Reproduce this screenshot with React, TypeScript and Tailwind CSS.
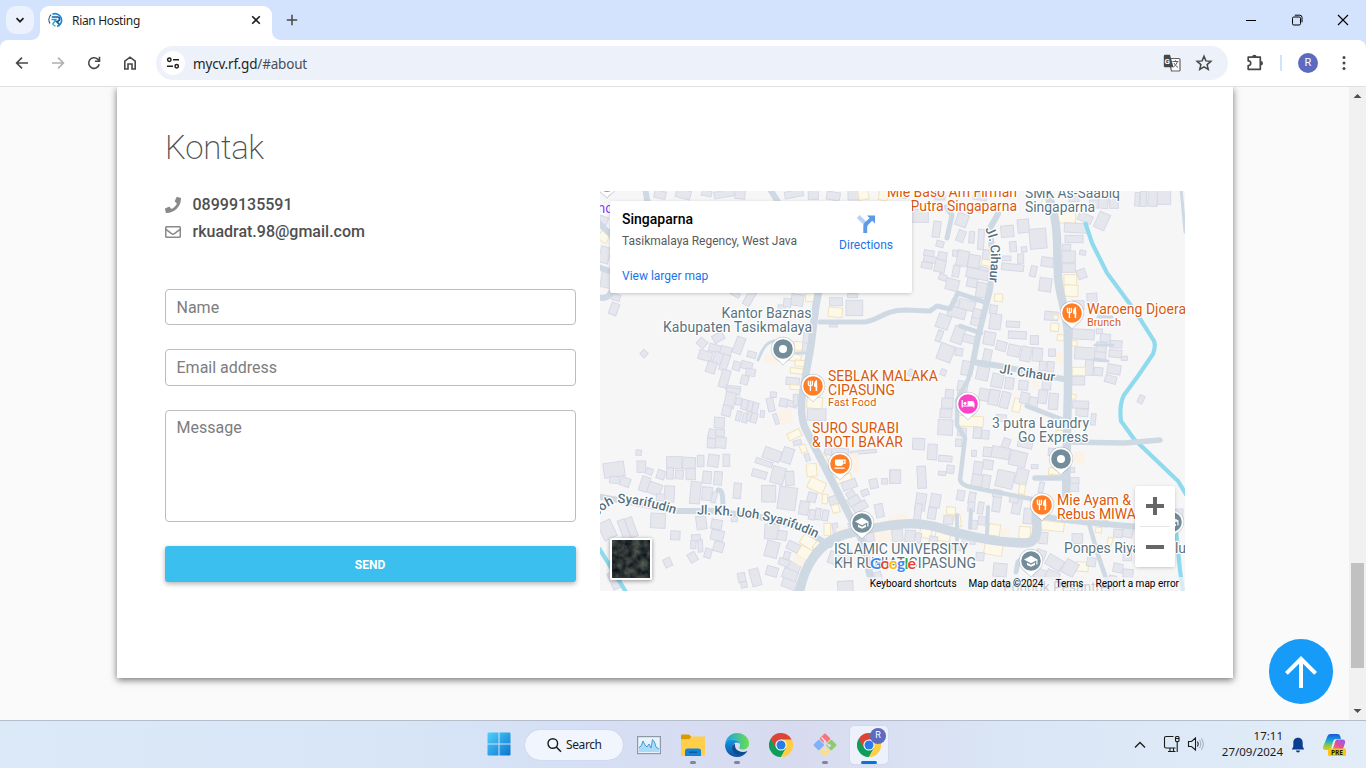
import React from "react";
import { FaPhone, FaRegEnvelope } from "react-icons/fa";
import { MdArrowUpward } from "react-icons/md";

/* ---------- map data ---------- */
type B = [number, number, number, number, number, number?]; // cx, cy, w, h, angle, kind (1 shop, 2 plaza)

const NW: B[] = [
  [180, 14, 34, 22, 12], [250, 12, 44, 26, 15], [320, 10, 30, 16, 10], [372, 12, 60, 20, -10], [420, 14, 30, 24, 5],
  [582, 12, 56, 20, -10], [640, 14, 30, 28, 0], [700, 18, 40, 24, 10], [760, 15, 32, 30, 0], [790, 14, 30, 30, -10, 1], [850, 16, 26, 30, 10, 1],
  [12, 140, 30, 30, 35, 1], [14, 195, 30, 48, 15], [20, 270, 34, 46, 10], [10, 90, 26, 22, 20],
  [132, 491, 18, 18, 40], [42, 357, 24, 36, 20], [48, 322, 24, 18, 15],
  [306, 459, 26, 24, 40], [345, 475, 36, 22, 15], [316, 497, 40, 28, 15], [355, 442, 34, 24, -30], [378, 482, 34, 24, 15],
  [417, 466, 26, 50, 20], [354, 504, 26, 34, 20], [455, 494, 26, 18, 15], [334, 532, 28, 34, 18], [374, 518, 22, 48, 20],
  [374, 566, 26, 54, 15], [410, 528, 22, 26, 15], [440, 526, 34, 22, 15], [452, 547, 28, 22, 10], [434, 570, 22, 26, 15], [400, 595, 44, 14, 5],
  [448, 325, 22, 46, 30], [405, 312, 30, 12, 30], [545, 352, 22, 14, 5], [592, 330, 36, 34, 8], [562, 338, 22, 26, 5],
  [631, 322, 28, 26, 0, 1], [706, 367, 42, 28, 5, 1], [708, 335, 38, 24, 0], [763, 354, 50, 46, 0], [758, 317, 30, 12, 0], [700, 407, 24, 8, 0],
  [620, 445, 20, 34, 8], [596, 468, 30, 26, 5, 1], [618, 474, 22, 30, 5], [586, 503, 34, 22, 12, 1], [600, 520, 30, 18, 5, 1], [591, 543, 40, 16, 8, 1],
  [515, 508, 44, 26, 15, 2], [578, 574, 40, 22, 5], [590, 592, 40, 14, 5, 1],
];
const NE: B[] = [
  [30, 14, 40, 20, 5], [90, 78, 50, 38, 0], [216, 90, 34, 38, 20], [150, 20, 30, 20, 0], [270, 20, 40, 20, 10],
  [140, 118, 22, 48, 8], [150, 162, 22, 18, 15], [213, 138, 22, 34, 20], [245, 142, 16, 34, 5], [273, 148, 18, 60, 3],
  [352, 124, 38, 34, -5], [400, 108, 34, 40, -5], [444, 146, 50, 60, -5], [369, 170, 20, 30, -5], [402, 178, 16, 16, -10],
  [117, 190, 30, 18, 10], [120, 208, 38, 18, 10], [110, 226, 32, 18, 10], [157, 198, 26, 24, 10], [150, 228, 32, 36, 12], [195, 190, 14, 18, 5],
  [218, 205, 34, 46, 12], [252, 214, 34, 38, 10], [292, 195, 28, 30, 5], [289, 218, 28, 18, 10, 1], [282, 240, 30, 16, 15],
  [198, 244, 20, 34, 10], [158, 262, 22, 18, 20], [262, 252, 66, 28, 12], [187, 284, 38, 34, 15], [246, 278, 30, 26, 10], [274, 300, 30, 44, 10],
  [350, 205, 26, 14, 0], [392, 206, 18, 28, 0], [368, 232, 66, 20, 6], [430, 244, 18, 32, 12], [472, 216, 36, 28, 8], [466, 284, 36, 40, 8],
  [552, 20, 30, 30, 0], [528, 82, 58, 34, 0, 1], [470, 40, 30, 24, 10, 1], [558, 114, 70, 28, 3], [552, 147, 54, 22, 0], [586, 84, 42, 24, 25], [636, 93, 34, 50, 25],
  [640, 30, 30, 50, 5], [672, 38, 26, 34, 0], [612, 42, 26, 24, 0],
  [742, 28, 14, 40, 3], [760, 26, 18, 46, 3], [788, 24, 28, 50, 3], [822, 18, 40, 50, 0],
  [530, 172, 24, 18, 0], [536, 200, 40, 34, 0], [536, 234, 40, 26, 0], [578, 188, 18, 14, 10], [575, 252, 26, 28, -20],
  [541, 270, 38, 32, 0, 1], [543, 302, 42, 34, 3, 1], [606, 325, 30, 30, -3], [565, 345, 34, 26, 0], [640, 372, 34, 16, 5],
  [326, 323, 24, 22, 0, 1], [310, 358, 22, 26, 8], [316, 395, 34, 46, 8], [298, 445, 34, 38, 10], [369, 403, 40, 18, 3], [382, 435, 54, 22, 3], [433, 450, 24, 26, 0],
  [484, 378, 40, 26, 5], [497, 382, 14, 14, 0, 1], [494, 412, 24, 24, 5, 1], [512, 443, 20, 18, 5, 1], [551, 460, 20, 16, 0, 1],
  [230, 345, 50, 30, 15], [200, 368, 54, 30, 15], [160, 395, 38, 42, 20], [196, 340, 24, 20, 15], [260, 372, 24, 30, 15], [205, 435, 34, 50, 20], [258, 396, 30, 22, 15], [240, 448, 44, 22, 15], [148, 438, 16, 34, 20],
  [167, 488, 44, 50, 20], [207, 486, 22, 22, 10], [160, 547, 16, 18, 20], [62, 548, 14, 20, 30], [232, 535, 34, 42, 10], [218, 588, 30, 30, 10],
  [292, 496, 24, 36, 12], [334, 468, 30, 28, 15], [372, 482, 36, 34, 12], [408, 492, 30, 44, 12], [442, 494, 30, 40, 5], [486, 488, 20, 22, 0], [512, 504, 28, 38, 0, 2],
  [278, 550, 36, 40, 12], [322, 572, 34, 40, 12], [358, 580, 26, 34, 8], [400, 586, 28, 28, 5], [437, 580, 20, 28, 5, 2], [470, 582, 26, 34, 5],
  [458, 528, 20, 28, 5], [482, 530, 20, 30, 5],
  [580, 433, 66, 30, 3], [628, 424, 18, 14, 0], [646, 444, 30, 24, 5], [584, 490, 60, 36, 3], [634, 472, 30, 30, 5], [678, 463, 36, 22, 3], [676, 491, 38, 22, 5],
  [630, 500, 34, 28, 3], [598, 533, 24, 46, 3], [566, 544, 40, 24, 0, 1], [625, 545, 26, 24, 5], [672, 538, 40, 28, 10], [662, 568, 34, 22, 15], [565, 572, 38, 26, 0], [703, 505, 18, 12, 0],
];
const SW: B[] = [
  [400, 4, 40, 20, 5], [390, 30, 30, 46, 12], [416, 34, 16, 22, 10], [434, 44, 18, 30, 15], [450, 50, 14, 34, 12], [466, 54, 16, 32, 12], [380, 62, 26, 32, 12], [416, 78, 14, 30, 15], [436, 84, 16, 28, 15], [462, 84, 18, 28, 15], [487, 72, 12, 20, 5], [447, 78, 10, 28, 15],
  [520, 14, 18, 16, 5], [512, 44, 20, 40, -12], [551, 38, 24, 24, 10], [576, 42, 30, 18, 15], [528, 87, 12, 32, -20], [587, 30, 14, 34, 0], [556, 80, 40, 44, -10, 2],
  [358, 98, 30, 32, 3], [338, 132, 26, 26, 15], [334, 160, 24, 28, 3], [362, 158, 32, 32, 5], [360, 128, 26, 20, 5],
  [116, 188, 16, 16, 5], [42, 239, 62, 44, -8], [44, 270, 30, 20, 5], [76, 276, 28, 26, 20], [124, 230, 26, 34, 0], [148, 244, 20, 18, 20], [183, 254, 24, 26, 20],
  [223, 218, 46, 36, 0], [267, 220, 38, 36, 3], [302, 213, 20, 34, 0], [340, 212, 32, 36, 8], [379, 211, 20, 36, 0], [210, 250, 20, 34, 3], [238, 254, 24, 26, 5], [272, 252, 28, 34, 0], [321, 262, 26, 36, 5], [354, 265, 24, 40, 5],
  [134, 282, 26, 44, 18], [164, 296, 40, 34, 20], [208, 312, 30, 48, 3], [182, 322, 26, 20, 5], [286, 308, 30, 66, 5], [321, 311, 30, 40, 5], [342, 322, 14, 32, 15], [412, 302, 22, 46, 5],
  [516, 194, 52, 34, 20], [562, 196, 32, 46, 18], [492, 218, 52, 16, 18], [478, 252, 44, 22, 15], [534, 256, 40, 50, 15], [569, 265, 26, 42, -3], [506, 311, 42, 50, 0], [562, 325, 54, 68, 8],
  [174, 392, 44, 44, 3], [304, 398, 30, 40, -8], [350, 403, 32, 28, 10], [403, 382, 18, 26, 0], [226, 436, 28, 26, 3], [288, 444, 26, 20, -5], [352, 436, 38, 30, 12], [280, 464, 16, 24, 0], [301, 468, 14, 36, -3], [356, 470, 30, 30, 15], [324, 490, 20, 28, 15], [278, 502, 24, 28, -30], [203, 518, 22, 26, -25],
  [22, 420, 40, 54, -25], [72, 418, 22, 60, -20], [94, 412, 22, 60, -20], [45, 570, 30, 52, -25],
  [515, 425, 42, 44, 3], [546, 436, 28, 28, 8], [516, 478, 38, 48, 15], [580, 470, 38, 26, 25], [561, 496, 18, 22, 15], [554, 518, 36, 20, 20], [516, 544, 34, 28, 15], [582, 532, 36, 26, 25], [570, 554, 44, 30, 22], [568, 582, 44, 26, 20], [466, 562, 28, 52, -15], [425, 563, 22, 28, -10], [432, 584, 18, 18, -10],
  [644, 38, 46, 34, 5, 1], [650, 74, 56, 34, 0], [583, 134, 40, 22, -25, 1], [592, 158, 24, 14, -15], [610, 176, 18, 24, -20, 1], [622, 202, 14, 22, -20],
  [635, 240, 30, 38, -5, 1], [650, 286, 50, 34, 25, 1], [636, 322, 26, 28, 15], [675, 327, 16, 28, 5, 1], [704, 330, 34, 26, -20], [612, 354, 28, 40, 10], [636, 374, 18, 30, 10], [654, 372, 16, 34, 8], [676, 376, 18, 32, 10], [707, 356, 22, 24, -15, 1], [682, 418, 20, 36, 0, 1], [706, 416, 16, 32, -10], [730, 425, 40, 26, -10, 2],
  [626, 456, 46, 34, 35, 1], [652, 468, 20, 26, 35, 1], [616, 490, 44, 34, 30, 1], [600, 514, 40, 24, 30, 2],
  [690, 180, 30, 30, 15], [674, 206, 14, 16, -15, 1], [720, 186, 50, 22, 5], [790, 186, 78, 10, -5], [765, 220, 26, 60, -10, 2], [730, 266, 50, 20, -18, 1], [748, 284, 44, 26, -20], [754, 316, 24, 26, -30], [762, 332, 36, 24, -30], [780, 350, 44, 24, -30], [795, 308, 22, 18, -20], [821, 281, 24, 28, -12], [854, 274, 18, 16, 0], [884, 260, 30, 40, 0], [838, 362, 24, 40, -12],
  [760, 404, 30, 16, -20], [850, 440, 60, 34, -5, 2], [885, 386, 30, 22, -5, 2], [810, 440, 24, 28, -10], [706, 506, 40, 36, 20], [740, 498, 30, 26, -10], [736, 590, 46, 34, -3], [834, 560, 22, 28, -15],
];
const SE: B[] = [
  [178, 12, 24, 26, 5], [172, 40, 34, 30, 3], [168, 70, 36, 26, 3], [166, 112, 44, 46, 3], [215, 8, 24, 14, 5],
  [243, 94, 74, 32, 4, 1], [216, 126, 26, 24, 5], [262, 128, 24, 34, 5], [286, 134, 22, 26, 5], [86, 162, 36, 34, 3], [127, 186, 28, 46, 3], [206, 158, 18, 22, 3], [166, 206, 40, 18, 5], [181, 238, 22, 24, 8], [156, 250, 22, 12, 5], [95, 262, 26, 66, -3], [16, 260, 32, 40, 0], [252, 190, 14, 18, 0],
  [282, 14, 30, 36, 12], [312, 22, 30, 46, 12], [345, 30, 26, 48, 14], [381, 46, 22, 40, 15, 1], [404, 24, 26, 32, 12], [430, 40, 26, 36, 10], [458, 20, 26, 40, 8], [490, 34, 28, 48, 4], [334, 84, 30, 20, 5],
  [548, 20, 20, 14, 10, 1], [572, 44, 48, 22, 2], [576, 68, 36, 22, 4], [610, 88, 14, 34, 6], [753, 28, 16, 24, 25], [512, 130, 28, 18, 0, 1],
  [348, 160, 22, 30, 20], [294, 186, 28, 28, 5], [332, 188, 54, 34, 10], [384, 206, 50, 44, 14], [405, 164, 44, 18, 12], [294, 224, 30, 28, 8], [264, 234, 26, 38, 8], [262, 272, 34, 36, 10], [288, 276, 24, 42, 10], [345, 268, 52, 50, 12], [395, 260, 36, 46, 14], [396, 298, 18, 28, 8, 1], [434, 230, 20, 12, 0],
  [486, 186, 22, 22, 3], [492, 244, 32, 20, 5, 1], [568, 203, 34, 40, -3, 2], [554, 272, 26, 18, 0], [552, 292, 28, 24, 0], [543, 240, 22, 14, 0], [454, 292, 14, 32, 12], [478, 330, 50, 36, 0, 2],
  [92, 336, 30, 52, 8], [84, 366, 20, 50, 8], [136, 332, 30, 40, 10], [126, 370, 24, 34, 8], [183, 362, 26, 22, 5, 1], [204, 392, 16, 36, -8, 1], [212, 316, 22, 30, 10], [246, 324, 20, 34, 10], [175, 390, 28, 26, 5], [244, 350, 20, 28, 5], [272, 354, 16, 36, 10], [276, 392, 22, 26, 5], [252, 404, 20, 26, 5], [320, 342, 24, 46, 8], [322, 310, 26, 22, 8], [380, 350, 26, 44, 12], [372, 328, 26, 20, 10],
  [25, 386, 60, 26, -8, 2], [107, 428, 34, 32, 12, 1], [158, 440, 44, 26, 8, 1], [313, 420, 34, 34, 8, 1], [347, 427, 30, 24, 12, 2], [404, 428, 34, 36, 5, 1], [310, 478, 54, 34, 10, 1], [22, 436, 32, 36, -5], [60, 438, 30, 34, 5], [84, 444, 18, 30, 10], [130, 452, 24, 26, 8], [236, 452, 40, 20, 5], [200, 470, 30, 20, 10], [270, 500, 24, 24, 5], [414, 378, 26, 46, 5],
  [484, 408, 76, 28, 6, 1], [460, 444, 26, 34, 5], [452, 494, 28, 28, 20], [562, 446, 32, 30, 0], [626, 420, 18, 16, 5, 1], [660, 454, 14, 22, 15, 1], [684, 430, 26, 24, 5], [714, 424, 30, 36, 10], [577, 530, 36, 28, 5, 1], [494, 518, 50, 34, 30], [540, 534, 40, 44, 30], [604, 516, 26, 26, 10], [450, 552, 34, 30, 20], [488, 556, 40, 26, 25], [330, 540, 40, 40, 5], [684, 534, 28, 26, 10], [712, 500, 26, 24, 0], [714, 550, 30, 24, 5], [668, 566, 22, 18, 10], [862, 374, 34, 34, 0], [640, 400, 24, 20, 8],
];

const FILL = ["#e6e7ed", "#fdf9ea", "#fbf2e8"];
const EDGE = ["#d6d8e8", "#f1e2bd", "none"];

function Blocks({ items, x, y }: { items: B[]; x: number; y: number }) {
  return (
    <g transform={`translate(${x} ${y}) scale(.33333)`}>
      {items.map(([cx, cy, w, h, a, k = 0], i) => (
        <rect key={i} x={cx - w / 2} y={cy - h / 2} width={w} height={h} fill={FILL[k]} stroke={EDGE[k]} strokeWidth="3" transform={`rotate(${a} ${cx} ${cy})`} />
      ))}
    </g>
  );
}

const ROADS: [string, number][] = [
  ["M820 285L816 305 811 345 804 385C800 405 801 420 806 430L862 540 870 575", 7.5],
  ["M799 595C803 568 818 540 850 533C890 524 915 520 940 528C980 540 1010 543 1026 543C1034 543 1037 536 1037 528L1036 508", 9.5],
  ["M1045 188C1052 205 1056 215 1057 240L1058 277C1060 300 1067 310 1068 335L1068 390 1067 430 1066 500", 8.5],
  ["M1035 515C1060 520 1080 522 1140 527", 6],
  ["M1088 520L1098 555 1110 590", 4.5],
  ["M998 214L990 228 993 262 990 290 978 337 973 362 1000 366 1063 379", 6],
  ["M973 362L968 380 957 400 957 425 965 438 960 480C962 487 972 487 990 491L1032 499", 4.5],
  ["M820 322L865 322C880 320 884 310 905 310L930 311 937 306 950 309 958 293 987 303", 5],
  ["M960 326L981 333", 4.5],
  ["M946 207L952 215 947 238", 5],
  ["M1027 406L1063 420", 5],
  ["M1067 442L1125 443 1160 440", 5.5],
  ["M1035 478L1064 478", 5.5],
  ["M596 496L630 502 675 511 712 511 760 517 800 528 830 545", 6],
  ["M718 490C722 490 723 493 723 510", 5],
  ["M988 507L987 534M971 510L970 528M957 515L957 540", 4],
  ["M758 360C762 350 766 342 774 341", 3],
  ["M796 353L812 353", 3],
  ["M645 188L648 205M768 186L780 205", 6],
  ["M598 222L616 240M598 267L612 272M598 297Q608 300 611 292", 6],
  ["M1095 345L1113 345M1095 359L1108 361M1098 317L1112 317", 3],
  ["M1181 188L1185 232", 3],
  ["M1016 572L1018 562 1026 555", 5],
];

/* ---------- map drawing ---------- */
const ICONS: Record<string, React.ReactNode> = {
  dot: <circle r="4" fill="#fff" />,
  fork: (
    <g fill="none" stroke="#fff" strokeWidth="1.3">
      <path d="M-4.6-5.2v3.6q0 1.4 2 1.4t2-1.4v-3.6M-2.6-5.2V5" />
      <path d="M3.4-5C1.8-4 1.6-1.5 1.9.4h1.7z" fill="#fff" />
      <path d="M3.4 0v5" strokeWidth="1.6" />
    </g>
  ),
  bed: (
    <g>
      <path d="M-5.8-4v7.600M-5.8 2H5.800M5.800 3.600V-.8" fill="none" stroke="#fff" strokeWidth="1.200" />
      <path d="M-.4-3H4Q6.200-3 6.200-.8V2H-.4z" fill="#fff" />
      <circle cx="-3" cy="-.8" r="1.500" fill="#fff" />
    </g>
  ),
  cup: (
    <g>
      <path d="M-5-4.5H3V0Q3 2-1 2T-5 0z" fill="#fff" />
      <path d="M2.5-3.8H5V-.8H2.5M-5.4 4.2H4.6" fill="none" stroke="#fff" strokeWidth="1.3" />
    </g>
  ),
  cap: <path d="M0-5.2L-7-1.5 0 2.3 5.3-.6V3.6H6.5V-1.6zM-4 1.6V4L0 5.7 4 4V1.6L0 3.8z" fill="#fff" />,
};

const PINS: [number, number, string, string][] = [
  [783, 349, "#738d9a", "dot"], [813, 386, "#ff7f27", "fork"], [1072, 313, "#ff7f27", "fork"], [968, 404, "#fa43c8", "bed"],
  [840, 464, "#ff7f27", "cup"], [862, 523, "#738d9a", "cap"], [1061, 459, "#738d9a", "dot"], [1042, 505, "#ff7f27", "fork"],
  [1031, 561, "#738d9a", "cap"], [1172, 522, "#738d9a", "cap"], [607, 182, "#8a4de8", "dot"],
];

type L = [string, number, number, number, number, "o" | "g", "start" | "end"];
const LABELS: L[] = [
  ["Mie Baso Am Firman", 1017, 197, 14, 130, "o", "end"],
  ["Putra Singaparna", 1017, 211, 14, 106.5, "o", "end"],
  ["SMK As-Saabiq", 1025, 198, 14, 95, "g", "start"],
  ["Singaparna", 1025, 212, 14, 70, "g", "start"],
  ["Kantor Baznas", 811.5, 318, 14, 90, "g", "end"],
  ["Kabupaten Tasikmalaya", 812, 332, 14, 149, "g", "end"],
  ["SEBLAK MALAKA", 828, 381, 14, 110, "o", "start"],
  ["CIPASUNG", 828, 395, 14, 67, "o", "start"],
  ["Fast Food", 828, 405.5, 11, 48.5, "o", "start"],
  ["SURO SURABI", 812, 433, 14, 87, "o", "start"],
  ["& ROTI BAKAR", 812, 447, 14, 91, "o", "start"],
  ["Waroeng Djoera", 1087, 314, 14, 99, "o", "start"],
  ["Brunch", 1087, 325.5, 11, 34, "o", "start"],
  ["3 putra Laundry", 1089, 428, 14, 97, "g", "end"],
  ["Go Express", 1088.5, 442, 14, 70.5, "g", "end"],
  ["Mie Ayam &", 1057, 505, 14, 74, "o", "start"],
  ["Rebus MIWA", 1057, 519, 14, 79, "o", "start"],
  ["ISLAMIC UNIVERSITY", 834, 554, 14, 134, "g", "start"],
  ["KH RUHIAT CIPASUNG", 834, 568, 14, 142, "g", "start"],
  ["Ponpes Riyadlul Ulu", 1064, 553, 14, 122, "g", "start"],
  ["Pondok Pesantren", 1003, 592, 14, 112, "g", "start"],
];

function MapDrawing() {
  return (
    <svg viewBox="600 191 585 400" className="block h-[400px] w-[585px]" fontFamily="Roboto, sans-serif">
      <rect x="600" y="191" width="585" height="400" fill="#f6f6f7" />
      <Blocks items={NW} x={600} y={190} />
      <Blocks items={NE} x={890} y={190} />
      <Blocks items={SW} x={600} y={390} />
      <Blocks items={SE} x={890} y={390} />
      <path d="M1085 222L1092 243 1107 273 1135 311 1154 341Q1156 346 1153 354L1138 376 1124 395Q1119 405 1121 421L1134 439 1178 481 1187 496M1176 530L1180 570 1183 592M599 548L626 592" fill="none" stroke="#90daee" strokeWidth="4.2" />
      <g fill="none" stroke="#cfd9e3" strokeLinecap="round" strokeLinejoin="round">
        {ROADS.map(([d, w], i) => <path key={i} d={d} strokeWidth={w} />)}
      </g>
      <g fill="#56707f" stroke="#fff" strokeWidth="2.5" paintOrder="stroke" strokeLinejoin="round" fontSize="13" fontWeight="500">
        <path id="st-a" d="M697 514.500C735 515 775 517 818 539" fill="none" stroke="none" />
        <path id="st-b" d="M556 566L597 518C606 507 612 502 622 503C640 504 658 509 675 514" fill="none" stroke="none" />
        <path id="st-c" d="M985 229C991 240 993 256 988 290" fill="none" stroke="none" />
        <path id="st-d" d="M999 373L1058 382" fill="none" stroke="none" />
        <text textLength="123"><textPath href="#st-a">Jl. Kh. Uoh Syarifudin</textPath></text>
        <text textAnchor="end"><textPath href="#st-b" startOffset="100%">Jl. Kh. Uoh Syarifudin</textPath></text>
        <text textLength="54"><textPath href="#st-c">Jl. Cihaur</textPath></text>
        <text textLength="56"><textPath href="#st-d">Jl. Cihaur</textPath></text>
      </g>
      {PINS.map(([x, y, c, k], i) => (
        <g key={i} transform={`translate(${x} ${y})`}>
          <path d="M0 16.5C-3 12-12.2 9-12.2 0A12.2 12.2 0 1 1 12.2 0C12.2 9 3 12 0 16.5z" fill="#8b95a0" opacity=".45" />
          <path d="M0 15.5C-3 11-11.5 8.5-11.5 0A11.5 11.5 0 1 1 11.5 0C11.5 8.5 3 11 0 15.5z" fill="#fff" />
          <circle r="9.8" fill={c} />
          {ICONS[k]}
        </g>
      ))}
      {LABELS.map(([t, x, y, s, len, c, a]) => (
        <text key={t} x={x} y={y} fontSize={s} textLength={len} textAnchor={a} fill={c === "o" ? "#d9590c" : "#5a7482"} stroke="#fff" strokeWidth="2.4" strokeLinejoin="round" paintOrder="stroke">{t}</text>
      ))}
      <text x="597.500" y="213" fontSize="14" fill="#8a3ff0" stroke="#fff" strokeWidth="2.4" paintOrder="stroke">ho</text>
    </svg>
  );
}

function MapPanel() {
  return (
    <div className="relative h-[400px] w-[585px] shrink-0 overflow-hidden font-[Roboto,sans-serif]">
      <MapDrawing />
      <div className="absolute left-[10px] top-[10px] flex h-[92px] w-[302px] justify-between rounded-[2px] bg-white pl-3 pr-[19px] pt-[9px] shadow-[0_1px_4px_-1px_rgba(0,0,0,0.3)]">
        <div className="flex flex-col">
          <div className="text-[14px] font-medium leading-[18px] text-black">Singaparna</div>
          <div className="mt-[5px] text-[12px] leading-4 text-[#5b5b5b]">Tasikmalaya Regency, West Java</div>
          <div className="mt-[19px] text-[12px] leading-4 text-[#1a73e8]">View larger map</div>
        </div>
        <div className="flex flex-col items-center">
          <svg viewBox="0 0 20 20" className="mt-[4px] h-5 w-5">
            <path d="M.8 4L3.6 1l7 7-2 3.4z" fill="#b4d2f8" />
            <path d="M7.3 19v-7q0-2 1.5-3.4L13.5 4 11 1.5h8v8L16.2 6.800 12 11q-.8.900-.8 2v6z" fill="#5c9ae8" />
          </svg>
          <div className="mt-[3px] text-[12px] leading-4 text-[#1a73e8]">Directions</div>
        </div>
      </div>
      <div className="absolute left-[10px] top-[347px] h-[42px] w-[42px] rounded-[2px] border-2 border-white shadow-[0_1px_4px_rgba(0,0,0,0.4)]">
        <svg viewBox="0 0 38 38" className="h-full w-full" preserveAspectRatio="none">
          <defs>
            <filter id="land" x="0" y="0" width="100%" height="100%" colorInterpolationFilters="sRGB">
              <feTurbulence type="fractalNoise" baseFrequency=".14" numOctaves="4" seed="4" />
              <feColorMatrix values=".4 0 0 0 -.02  .4 0 0 0 .01  .3 0 0 0 .06  0 0 0 0 1" />
            </filter>
          </defs>
          <rect width="38" height="38" fill="#2f3b3b" />
          <rect width="38" height="38" filter="url(#land)" />
        </svg>
      </div>
      <div className="absolute left-[535px] top-[295px] flex h-[81px] w-10 flex-col items-center rounded-[2px] bg-white shadow-[0_1px_4px_-1px_rgba(0,0,0,0.3)]">
        <svg viewBox="0 0 40 40" className="h-10 w-10"><path d="M11 20H29M20 11V29" stroke="#666" strokeWidth="4" /></svg>
        <div className="h-px w-[30px] bg-[#e6e6e6]" />
        <svg viewBox="0 0 40 40" className="h-10 w-10"><path d="M11 20H29" stroke="#666" strokeWidth="4" /></svg>
      </div>
      <svg viewBox="0 0 60 24" className="absolute left-[268px] top-[359px] h-6 w-[60px]" fontFamily="Lato, sans-serif">
        <text x="2" y="19" fontSize="16" fontWeight="700" textLength="46" stroke="#fff" strokeWidth="2" strokeLinejoin="round" paintOrder="stroke">
          <tspan fill="#4285f4">G</tspan><tspan fill="#ea4335">o</tspan><tspan fill="#fbbc04">o</tspan><tspan fill="#4285f4">g</tspan><tspan fill="#34a853">l</tspan><tspan fill="#ea4335">e</tspan>
        </text>
      </svg>
      <div className="absolute bottom-0 right-0 flex h-[14px] items-center gap-3 bg-[#f5f5f5]/70 px-[6px] text-[10px] leading-[14px] text-black">
        <span className="whitespace-nowrap">Keyboard shortcuts</span>
        <span className="whitespace-nowrap">Map data ©2024</span>
        <span>Terms</span>
        <span className="whitespace-nowrap">Report a map error</span>
      </div>
    </div>
  );
}

/* ---------- browser chrome ---------- */
function Favicon() {
  return (
    <svg viewBox="0 0 16 16" className="h-4 w-4">
      <path d="M3.200 2.600A7 7 0 0 0 2 11.500" fill="none" stroke="#2c4a66" strokeWidth="1.100" />
      <path d="M4.500 2.100A6.600 6.600 0 1 1 9 14.500" fill="none" stroke="#1b87e0" strokeWidth="1.700" />
      <path d="M3.800 5H9.500q2.300.3 2 2.300T8.500 9.500L11.500 12.500" fill="none" stroke="#17598f" strokeWidth="1.700" />
      <path d="M3.500 7.500H8L4.800 12Q6 13.700 7.500 14.200" fill="none" stroke="#1d9be6" strokeWidth="1.300" />
    </svg>
  );
}

function TabStrip() {
  return (
    <div className="flex h-10 items-start bg-[#d3e3fd]">
      <div className="ml-[6px] mt-[6px] flex h-7 w-7 items-center justify-center rounded-[10px] bg-[#ebf2fe]">
        <svg viewBox="0 0 10 10" className="h-[10px] w-[10px]"><path d="M1.500 3.200L5 6.700 8.500 3.200" fill="none" stroke="#1f1f1f" strokeWidth="1.700" /></svg>
      </div>
      <div className="relative ml-[6px] mt-[6px] flex h-[34px] w-[232px] items-center rounded-t-[9px] bg-white pl-2 pr-[10px]">
        <div className="absolute bottom-0 left-[-8px] h-2 w-2 bg-[radial-gradient(circle_at_0_0,#d3e3fd_7.500px,#fff_8px)]" />
        <div className="absolute bottom-0 right-[-8px] h-2 w-2 bg-[radial-gradient(circle_at_100%_0,#d3e3fd_7.500px,#fff_8px)]" />
        <div className="-mt-[6px] flex w-full items-center">
          <Favicon />
          <span className="ml-2 pt-[2px] text-[12px] leading-4 tracking-[-0.33px] text-[#1f1f1f]">Rian Hosting</span>
          <svg viewBox="0 0 12 12" className="ml-auto h-3 w-3"><path d="M2.200 2.200L9.800 9.800M9.800 2.200L2.200 9.800" stroke="#1f1f1f" strokeWidth="1.600" /></svg>
        </div>
      </div>
      <svg viewBox="0 0 12 12" className="ml-[14px] mt-[14px] h-3 w-3"><path d="M6 .8V11.200M.8 6H11.200" stroke="#474747" strokeWidth="1.500" /></svg>
      <div className="ml-auto mr-[17px] mt-[14px] flex items-center gap-[34px]">
        <svg viewBox="0 0 12 12" className="h-3 w-3"><path d="M1 6.500H11" stroke="#000" /></svg>
        <svg viewBox="0 0 12 12" className="h-3 w-3"><rect x="1.500" y="3" width="8" height="8" rx="1.300" fill="none" stroke="#000" /><path d="M3.800 1.200H8.800Q11 1.200 11 3.400V8.400" fill="none" stroke="#000" /></svg>
        <svg viewBox="0 0 12 12" className="h-3 w-3"><path d="M1 1L11 11M11 1L1 11" stroke="#000" strokeWidth="1.100" /></svg>
      </div>
    </div>
  );
}

function Toolbar() {
  const s = { fill: "none", stroke: "#474747", strokeWidth: 1.6 } as const;
  return (
    <div className="bg-[#d3e3fd]">
      <div className="flex h-[46px] items-center rounded-t-[8px] bg-white pl-[14px] pr-[14px]">
        <div className="flex gap-5">
          <svg viewBox="0 0 16 16" className="h-4 w-4"><path d="M14 8H3M8 2.600L2.600 8 8 13.400" {...s} /></svg>
          <svg viewBox="0 0 16 16" className="h-4 w-4"><path d="M2 8H13M8 2.600L13.400 8 8 13.400" {...s} stroke="#b0b0b0" /></svg>
          <svg viewBox="0 0 16 16" className="h-4 w-4"><path d="M13.200 9.200A5.300 5.300 0 1 1 11.700 4.200L13.300 5.800" {...s} /><path d="M13.500 1.800V6.200H9" {...s} /></svg>
          <svg viewBox="0 0 16 16" className="h-4 w-4"><path d="M2.800 14V6.200L8 2.200 13.200 6.200V14H10V9H6V14z" {...s} /></svg>
        </div>
        <div className="ml-[18px] flex h-[34px] w-[1072px] items-center rounded-full bg-[#edf2fa] pl-[5px] pr-[15px]">
          <div className="flex h-6 w-6 items-center justify-center rounded-full bg-white">
            <svg viewBox="0 0 16 16" className="h-4 w-4" fill="none" stroke="#1f1f1f" strokeWidth="1.500"><circle cx="4.300" cy="4.800" r="1.700" /><path d="M8 4.800H14M2 11.200H8" /><circle cx="11.700" cy="11.200" r="1.700" /></svg>
          </div>
          <span className="ml-2 pt-px text-[13.500px] leading-5 tracking-[-0.18px] text-[#1f1f1f]">mycv.rf.gd<span className="text-[#474f5c]">/#about</span></span>
          <svg viewBox="0 0 18 18" className="ml-auto h-[18px] w-[18px]">
            <path d="M8 4.500H16Q17 4.500 17 5.500V16Q17 17 16 17H8.500L7.500 13" fill="#fff" stroke="#5f6368" strokeWidth="1.200" />
            <path d="M2 .8H7L10.500 13.200H2Q.8 13.200.8 12V2Q.8.8 2 .8z" fill="#474747" />
            <text x="1.600" y="10" fontSize="8" fontWeight="700" fill="#fff" fontFamily="Roboto">G</text>
            <path d="M9.500 7.500H15.500M12.500 6.200V7.500M14.500 7.500Q13.500 11 10.500 13M11 9Q12.500 12 15 13.500" fill="none" stroke="#5f6368" />
          </svg>
          <svg viewBox="0 0 18 18" className="ml-[14px] h-[18px] w-[18px]"><path d="M9 2.200L10.900 6.900 15.900 7.300 12.100 10.600 13.300 15.500 9 12.900 4.700 15.500 5.900 10.600 2.100 7.300 7.100 6.900z" {...s} strokeWidth="1.500" /></svg>
        </div>
        <svg viewBox="0 0 18 18" className="ml-[18px] h-[18px] w-[18px]">
          <path d="M2.200 3.200H14.300V15.300H2.200V11.600Q4.700 11.600 4.700 9.200T2.200 6.800z" fill="none" stroke="#474747" strokeWidth="1.700" strokeLinejoin="round" />
          <path d="M6.200 3a2.200 2.200 0 0 1 4.400 0zM14.800 7a2.200 2.200 0 0 1 0 4.400z" fill="#474747" />
        </svg>
        <div className="ml-[16px] h-4 w-[2px] bg-[#d3e3fd]" />
        <div className="ml-[16px] flex h-5 w-5 items-center justify-center rounded-full bg-[#5c6bc0] font-[Roboto,sans-serif] text-[11px] text-white">R</div>
        <svg viewBox="0 0 16 16" className="ml-auto h-4 w-4" fill="#474747"><circle cx="8" cy="2.500" r="1.500" /><circle cx="8" cy="8" r="1.500" /><circle cx="8" cy="13.500" r="1.500" /></svg>
      </div>
      <div className="h-px bg-[#dfe1e4]" />
    </div>
  );
}

/* ---------- page ---------- */
function Field({ label, className }: { label: string; className: string }) {
  return <div className={`w-[411px] rounded-[4px] border border-[#bdbdbd] px-[10.5px] text-[16px] leading-6 text-[#7d7d7d] ${className}`}>{label}</div>;
}

function Contact() {
  return (
    <section className="h-[591px] w-[1116px] bg-white pl-12 pt-[41px] font-[Roboto,sans-serif] shadow-[0_2px_7px_rgba(0,0,0,0.55)]">
      <h2 className="text-[33px] font-extralight leading-10 tracking-[-0.3px] text-[#4f4f4f]">Kontak</h2>
      <div className="mt-[23px] flex gap-6">
        <div className="w-[411px]">
          <div className="flex h-[27px] items-center text-[16px] font-medium text-[#4f4f4f]"><FaPhone className="mr-[11.500px] h-4 w-4 text-[#8a8a8a]" />08999135591</div>
          <div className="flex h-[27px] items-center text-[16px] font-medium text-[#4f4f4f]"><FaRegEnvelope className="mr-[11.500px] h-4 w-4 text-[#8a8a8a]" />rkuadrat.98@gmail.com</div>
          <Field label="Name" className="mt-[44px] h-9 pt-[6px]" />
          <Field label="Email address" className="mt-6 h-[37px] pt-[6px]" />
          <Field label="Message" className="mt-6 h-[112px] pt-[5px]" />
          <div className="mt-6 flex h-9 items-center justify-center rounded-[3px] bg-[#3bbfee] pr-px pt-[2px] text-[12px] font-bold text-white shadow-[0_2px_5px_rgba(0,0,0,0.3)]">SEND</div>
        </div>
        <MapPanel />
      </div>
    </section>
  );
}

function Viewport() {
  return (
    <div className="relative flex h-[633px] overflow-hidden bg-[#fafafa]">
      <main className="h-full flex-1 overflow-hidden pl-[117px]"><Contact /></main>
      <div className="flex w-[17px] flex-col items-center bg-[#f1f1f1]">
        <svg viewBox="0 0 17 17" className="h-[17px] w-[17px]"><path d="M4.500 11L8.500 7 12.500 11z" fill="#505050" /></svg>
        <div className="mt-[459px] h-[105px] w-[13px] bg-[#c1c1c1]" />
        <svg viewBox="0 0 17 17" className="mt-auto h-[17px] w-[17px]"><path d="M4.500 6L8.500 10 12.500 6z" fill="#505050" /></svg>
      </div>
      <div className="absolute left-[1269px] top-[552px] flex h-[65px] w-16 items-center justify-center rounded-full bg-[#169bf8] text-white">
        <MdArrowUpward className="h-12 w-12" />
      </div>
    </div>
  );
}

/* ---------- taskbar ---------- */
function Chrome() {
  return (
    <svg viewBox="0 0 24 24" className="h-6 w-6">
      <path d="M12 12L1.600 6A12 12 0 0 0 12 24L17 15z" fill="#0f9d58" />
      <path d="M12 12L17.200 15 12 24A12 12 0 0 0 22.400 6H12z" fill="#ffcd40" />
      <path d="M12 6.500H22.600A12 12 0 0 0 1.600 6L7 15z" fill="#db4437" />
      <circle cx="12" cy="12" r="5.600" fill="#fff" />
      <circle cx="12" cy="12" r="4.500" fill="#2a7bea" />
    </svg>
  );
}

function Slot({ children, mark = "none" }: { children: React.ReactNode; mark?: "none" | "dot" | "bar" }) {
  return (
    <div className={`relative flex h-[38px] w-[38px] items-center justify-center ${mark === "bar" ? "rounded-[4px] bg-[#edf1fb] shadow-[0_0_1px_rgba(0,0,0,0.2)]" : ""}`}>
      {children}
      {mark === "dot" && <div className="absolute bottom-0 h-[3px] w-[6px] rounded-full bg-[#80869a]" />}
      {mark === "bar" && <div className="absolute bottom-0 h-[3px] w-4 rounded-full bg-[#0078d4]" />}
    </div>
  );
}

function Taskbar() {
  return (
    <div className="flex h-12 items-center border-t border-[#b5bdca] bg-[linear-gradient(90deg,#dce9f7_0%,#d7e5f7_30%,#d5dff5_42%,#d8dbef_58%,#dae6f6_75%,#e2edf8_100%)] text-[#1b1b1b]">
      <svg viewBox="0 0 24 24" className="-mt-px ml-[486.500px] mr-[14.500px] h-[24px] w-6">
        <defs><linearGradient id="wl" x1="0" y1="0" x2="1" y2="1" gradientUnits="objectBoundingBox"><stop stopColor="#4fd0fb" /><stop offset="1" stopColor="#0a74d0" /></linearGradient></defs>
        <path d="M.5 1.500Q.5.500 1.500.500H11.500V11.500H.5zM12.500.500H22.500Q23.500.500 23.500 1.500V11.500H12.500zM.5 12.500H11.500V23.500H1.500Q.5 23.500.5 22.500zM12.500 12.500H23.500V22.500Q23.500 23.500 22.500 23.500H12.500z" fill="url(#wl)" />
      </svg>
      <div className="flex h-[30px] w-[98px] items-center rounded-full bg-[#f1f5fd] pl-[21px] shadow-[0_0_1px_rgba(0,0,0,0.2)]">
        <svg viewBox="0 0 16 16" className="h-4 w-4"><circle cx="6.800" cy="6.500" r="4.800" fill="none" stroke="#1b1b1b" strokeWidth="1.400" /><path d="M10.300 10L15 14.700" stroke="#1b1b1b" strokeWidth="1.600" /></svg>
        <span className="ml-[4px] text-[12px] leading-4 tracking-[-0.4px]">Search</span>
      </div>
      <div className="ml-[7px] flex gap-[6px]">
        <Slot>
          <svg viewBox="0 0 24 20" className="h-5 w-6"><rect x=".6" y="1.600" width="22.800" height="17" fill="#e8f3fb" stroke="#8f99a3" strokeWidth="1.200" /><path d="M2 17V13L4.500 10 6 6 8 10 10 12 12 9 14 13 15.500 4.500 17.500 7 19 12 22 14V17z" fill="#a9daf7" /><path d="M2 13L4.500 10 6 6 8 10 10 12 12 9 14 13 15.500 4.500 17.500 7 19 12 22 14" fill="none" stroke="#3a95d0" strokeWidth=".9" /></svg>
        </Slot>
        <Slot mark="dot">
          <svg viewBox="0 0 24 24" className="h-6 w-6"><path d="M0 2.500Q0 1.500 1 1.500H8L10.500 4 9 6.500H0z" fill="#d99a00" /><path d="M0 6.500H8L10.500 3.500H23Q24 3.500 24 4.500V22Q24 23 23 23H1Q0 23 0 22z" fill="#ffce4a" /><path d="M4 23V18Q4 15.500 6.500 15.500H17.500Q20 15.500 20 18V23z" fill="#1283d8" /><path d="M8 19.200H16" stroke="#0a5299" strokeWidth="1.200" /></svg>
        </Slot>
        <Slot mark="dot">
          <svg viewBox="0 0 24 24" className="h-6 w-6">
            <defs>
              <linearGradient id="e1" x1="0" x2="1"><stop stopColor="#1ba1e8" /><stop offset="1" stopColor="#6ae04c" /></linearGradient>
              <linearGradient id="e2" x1="0" y1="0" x2="0" y2="1"><stop stopColor="#1498de" /><stop offset="1" stopColor="#0c50a6" /></linearGradient>
            </defs>
            <path d="M.3 10.500C1.200 4.500 6 0 12 0C18.500 0 24 4.500 24 10.500C24 14.500 21 16.500 17.500 16.500C15 16.500 14 15.400 14.300 14.500C16 12.500 15 8.500 9.500 6.800C5.500 6 2 8 .3 10.500z" fill="url(#e1)" />
            <path d="M0 12C.5 8 4.500 6 8.500 6.600C12 7.200 14 9 14.200 10.200C11 8.200 7.800 10.500 7.800 14C7.800 17.500 11 20.500 15 20.500C18.500 20.500 20.500 19.300 22.200 18.200C20 22 16.500 24 12 24C5 24 0 18.500 0 12z" fill="url(#e2)" />
            <path d="M10 10.500C7 12 6.500 16 8.500 19C10.500 22 15 22.300 18.500 20.800C20.500 20 22 19 22.400 18C18 20 12 18.500 10.500 15Q9.500 12 10 10.500z" fill="#114a8b" />
          </svg>
        </Slot>
        <Slot><Chrome /></Slot>
        <Slot mark="dot">
          <svg viewBox="0 0 24 24" className="h-6 w-6">
            <g transform="rotate(45 12 12)"><rect x="3.600" y="3.600" width="8" height="8" rx="1" fill="#f5777b" /><rect x="12.400" y="3.600" width="8" height="8" rx="1" fill="#8fcb68" /><rect x="3.600" y="12.400" width="8" height="8" rx="1" fill="#82b1fb" /><rect x="12.400" y="12.400" width="8" height="8" rx="1" fill="#fbdf88" /></g>
            <path d="M8.500 4.500L12 8V17M12 9.500L16 12.500" fill="none" stroke="#dadef0" strokeWidth="1.500" /><circle cx="12" cy="9" r="1.500" fill="#dadef0" /><circle cx="12" cy="16.500" r="1.500" fill="#dadef0" /><circle cx="16.300" cy="12.500" r="1.500" fill="#dadef0" />
          </svg>
        </Slot>
        <Slot mark="bar">
          <Chrome />
          <div className="absolute left-[20px] top-[2px] flex h-4 w-4 items-center justify-center rounded-full bg-[#5c6bc0] font-[Roboto,sans-serif] text-[9px] text-white">R</div>
        </Slot>
      </div>
      <div className="ml-auto flex items-center">
        <svg viewBox="0 0 12 12" className="mr-[17px] h-3 w-3"><path d="M1 8.500L6 3.500 11 8.500" fill="none" stroke="#1b1b1b" strokeWidth="1.300" /></svg>
        <svg viewBox="0 0 18 18" className="-mt-px mr-[6px] h-[18px] w-[18px]" fill="none" stroke="#1b1b1b" strokeWidth="1.100"><path d="M10.500 1.500H3Q1.500 1.500 1.500 3V11.500Q1.500 13 3 13H12.500M5 16.500H12.500M7 13V16.500M10.500 13V16.500" /><rect x="12.500" y="1.500" width="3.500" height="5" rx="1" /><path d="M14.200 6.500V17M12.500 3.500H16" /></svg>
        <svg viewBox="0 0 18 18" className="-mt-px mr-[15px] h-[18px] w-[18px]" fill="none" stroke="#1b1b1b" strokeWidth="1.100"><path d="M1.500 6.500H4.500L8.500 3V15L4.500 11.500H1.500zM10.500 6.500Q12 9 10.500 11.500" /><path d="M12.500 4.800Q15 9 12.500 13.200M14.500 3.200Q18 9 14.500 14.800" stroke="#a9b4c0" /></svg>
        <div className="-mt-px flex w-[63px] flex-col items-end text-[11.500px] leading-4"><span>17:11</span><span>27/09/2024</span></div>
        <svg viewBox="0 0 14 16" className="ml-[8px] mr-[17px] h-4 w-[14px]"><path d="M7 .8C3.800.8 2.300 3 2.300 6V9.500L.8 12.500H13.200L11.700 9.500V6C11.700 3 10.200.8 7 .8zM5 13.500a2 2 0 0 0 4 0z" fill="#0a3d8f" /></svg>
        <svg viewBox="0 0 24 24" className="mr-[20px] h-6 w-6">
          <defs>
            <linearGradient id="c1" x1="0" y1="0" x2="0" y2="1"><stop stopColor="#1b55d8" /><stop offset=".4" stopColor="#17a5dc" /><stop offset=".7" stopColor="#7ccc4a" /><stop offset="1" stopColor="#f3c21f" /></linearGradient>
            <linearGradient id="c2" x1="1" y1="0" x2="0" y2="1"><stop stopColor="#8f5cf2" /><stop offset=".5" stopColor="#e0509f" /><stop offset="1" stopColor="#fb8c4a" /></linearGradient>
          </defs>
          <path d="M5.500 3Q6.200 1 8.500 1H15.500Q17.500 1 18.200 3L19 6H14Q12 6 11.300 8L9 15.500Q8.500 17 6.500 17H3.500Q.3 17 1.200 13.500z" fill="url(#c1)" />
          <path d="M14.500 6.500H20.500Q23.800 6.500 23 10L20.500 17.500H8.500Q10.500 17 11.200 15L13 9Q13.500 7 14.500 6.500z" fill="url(#c2)" />
          <rect x="6" y="15.500" width="18" height="7.500" rx="1.500" fill="#fdc50d" />
          <text x="15" y="21.800" fontSize="6.500" fontWeight="700" textAnchor="middle" fill="#1b1b1b">PRE</text>
        </svg>
      </div>
    </div>
  );
}

export default function App() {
  return (
    <div className="h-[768px] w-[1366px] overflow-hidden font-['Noto_Sans',sans-serif]">
      <TabStrip />
      <Toolbar />
      <Viewport />
      <Taskbar />
    </div>
  );
}
